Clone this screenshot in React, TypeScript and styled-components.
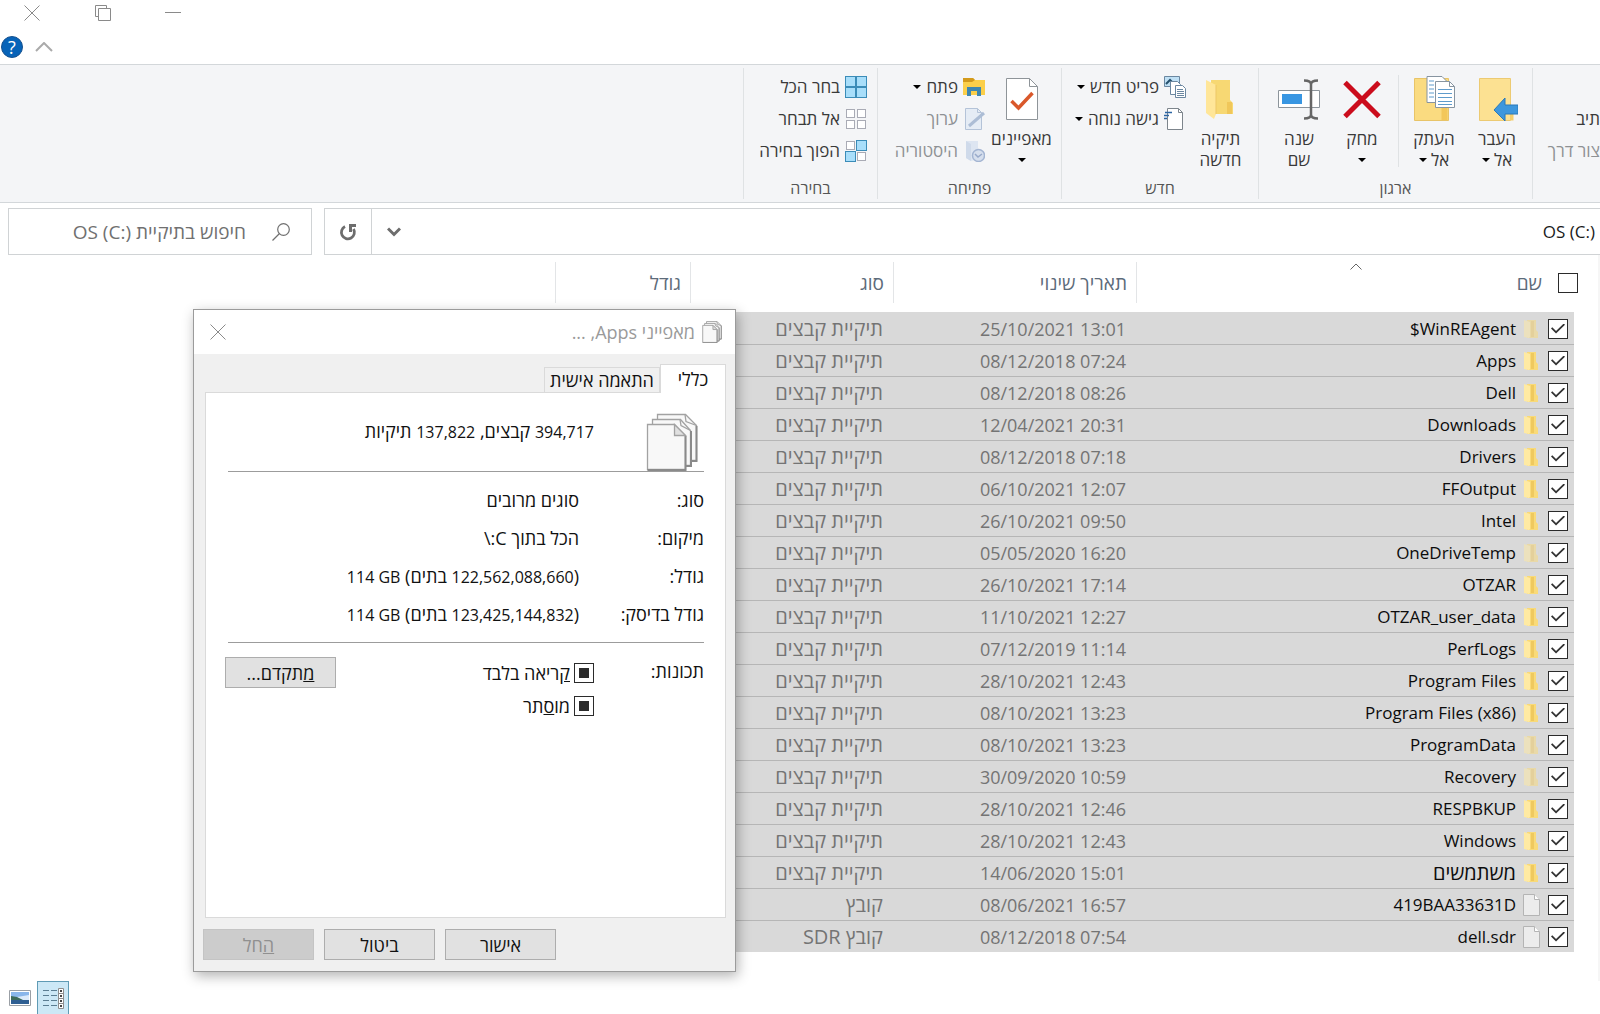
import React from "react";
import styled, { createGlobalStyle, css } from "styled-components";

const uiFont = `"Open Sans", "Noto Sans", sans-serif`;

const GlobalStyle = createGlobalStyle`
  *, *::before, *::after { box-sizing: border-box; }
  body { margin: 0; background: #fff; }
  button, input { font: inherit; color: inherit; margin: 0; }
`;

/* ---------- window frame ---------- */

const Window = styled.div`
  position: relative;
  display: flex;
  flex-direction: column;
  height: 100vh;
  overflow: hidden;
  font-family: ${uiFont};
  font-size: 17px;
  line-height: 20px;
  color: #1a1a1a;
`;

const PlainButton = styled.button`
  display: flex;
  align-items: center;
  justify-content: center;
  padding: 0;
  border: 0;
  background: none;
`;

const TitleBar = styled.header`
  direction: ltr;
  display: flex;
  align-items: center;
  height: 26px;
`;

const CaptionButton = styled(PlainButton)`
  width: 70px;
  height: 26px;
  &:first-child {
    width: 64px;
    margin-right: 4px;
  }
`;

const HelpBar = styled.div`
  direction: ltr;
  display: flex;
  align-items: center;
  gap: 12px;
  height: 38px;
  padding: 4px 0 0 1px;
`;

const HelpButton = styled(PlainButton)`
  width: 22px;
  height: 22px;
  border-radius: 50%;
  background: #0763b8;
  border: 1px solid #15518f;
  color: #fff;
  font-size: 18px;
`;

/* ---------- ribbon ---------- */

const Ribbon = styled.div`
  display: flex;
  height: 139px;
  padding: 3px 0;
  border-top: 1px solid #d3d7da;
  border-bottom: 1px solid #d3d7da;
  background: #f4f5f7;
`;

const Group = styled.section<{ $width: number }>`
  display: flex;
  flex-direction: column;
  flex: none;
  width: ${(p) => p.$width}px;
  border-left: 1px solid #dfe2e4;
`;

const GroupBody = styled.div<{ $pad?: number }>`
  display: flex;
  flex: 1;
  padding-right: ${(p) => p.$pad ?? 0}px;
  padding-top: 3px;
`;

const GroupLabel = styled.h2`
  margin: 0;
  height: 21px;
  padding-left: 0;
  font-size: 16px;
  font-weight: 400;
  line-height: 20px;
  text-align: center;
  color: #555;
`;

const BigButton = styled(PlainButton)<{ $width: number }>`
  flex-direction: column;
  justify-content: flex-start;
  width: ${(p) => p.$width}px;
  padding-top: 5px;
  line-height: 21px;
  color: #3a3a3a;
  white-space: nowrap;
  svg { flex: none; margin-bottom: 6px; }
`;

const LabelLine = styled.span`
  display: flex;
  align-items: center;
  justify-content: center;
  gap: 4px;
  height: 21px;
`;

const Caret = styled.i`
  width: 0;
  height: 0;
  border: 4px solid transparent;
  border-top-color: #000;
  border-bottom-width: 0;
`;

const Divider = styled.span`
  width: 1px;
  height: 92px;
  margin: 4px 4px 0;
  background: #dfe2e4;
`;

const SmallStack = styled.div`
  display: flex;
  flex-direction: column;
`;

const SmallButton = styled(PlainButton)<{ $off?: boolean }>`
  justify-content: flex-start;
  gap: 5px;
  height: 32px;
  color: ${(p) => (p.$off ? "#8e9194" : "#3a3a3a")};
  white-space: nowrap;
  svg { opacity: ${(p) => (p.$off ? 0.6 : 1)}; }
`;

const CutOff = styled.div`
  display: flex;
  flex-direction: column;
  padding-top: 35px;
`;

/* ---------- address row ---------- */

const AddressRow = styled.div`
  display: flex;
  gap: 12px;
  padding: 5px 0 0 8px;
`;

const AddressBox = styled.div`
  display: flex;
  flex: 1;
  height: 47px;
  border: 1px solid #d0d3d5;
  border-right: 0;
`;

const Path = styled.div`
  flex: 1;
  padding-right: 5px;
  line-height: 45px;
`;

const AddressButton = styled(PlainButton)<{ $line?: boolean }>`
  width: ${(p) => (p.$line ? 47 : 44)}px;
  ${(p) => p.$line && css`border-right: 1px solid #d0d3d5;`}
`;

const SearchBox = styled.label`
  display: flex;
  align-items: center;
  gap: 26px;
  width: 304px;
  height: 47px;
  padding-right: 21px;
  border: 1px solid #d0d3d5;
`;

const SearchInput = styled.input`
  flex: 1;
  min-width: 0;
  padding: 0;
  border: 0;
  outline: 0;
  background: none;
  font-size: 19px;
  &::placeholder { color: #707070; opacity: 1; }
`;

/* ---------- file list ---------- */

const Pane = styled.main`
  flex: 1;
  min-height: 0;
  border-right: 2px solid #f6f6f6;
`;

const FileTable = styled.table`
  table-layout: fixed;
  width: 1043px;
  border-collapse: separate;
  border-spacing: 0;
`;

const Th = styled.th`
  padding: 7px 0 9px;
  font-size: 19px;
  font-weight: 400;
  color: #5d6b7a;
`;

const HeadCell = styled.div<{ $pad: number }>`
  position: relative;
  display: flex;
  align-items: center;
  gap: 16px;
  height: 41px;
  padding-right: ${(p) => p.$pad}px;
  border-left: 1px solid #e3e5e7;
`;

const SortMark = styled.svg`
  position: absolute;
  top: 1px;
  left: 0;
  right: 24px;
  margin: 0 auto;
`;

const Row = styled.tr`
  td { border-top: 1px solid #b6b6b6; }
  &:first-child td { border-top-color: #d9d9d9; }
  td:first-child { background: none; border-top-color: transparent; }
`;

const Td = styled.td<{ $size?: number }>`
  height: 32px;
  padding: 0 10px 0 0;
  background: #d9d9d9;
  color: #747474;
  font-size: ${(p) => p.$size ?? 17}px;
  white-space: nowrap;
`;

const Gutter = styled.td`
  height: 32px;
  padding: 0;
`;

const NameCell = styled.label<{ $hebrew: boolean }>`
  display: flex;
  align-items: center;
  height: 31px;
  margin-right: -4px;
  font-size: ${(p) => (p.$hebrew ? 20 : 17)}px;
  color: #0c0c0c;
  svg { margin: 0 8px 0 7px; }
`;

const Tick = styled.input<{ $mixed?: boolean }>`
  appearance: none;
  flex: none;
  display: grid;
  place-items: center;
  width: 20px;
  height: 20px;
  border: 1px solid #2b2b2b;
  background: #fff;
  &:checked::before {
    content: "";
    ${(p) =>
      p.$mixed
        ? css`
            width: 10px;
            height: 10px;
            background: #2b2b2b;
          `
        : css`
            width: 14px;
            height: 10px;
            background: #333;
            clip-path: polygon(0 50%, 9% 38%, 36% 76%, 91% 0, 100% 12%, 36% 100%);
          `}
  }
`;

const StatusBar = styled.footer`
  direction: ltr;
  display: flex;
  gap: 6px;
  height: 33px;
  padding-left: 9px;
`;

const ViewButton = styled(PlainButton)<{ $on?: boolean }>`
  height: 33px;
  ${(p) =>
    p.$on &&
    css`
      width: 32px;
      border: 1px solid #5f9bb5;
      border-bottom: 0;
      background: #cce8f6;
    `}
`;

/* ---------- properties dialog ---------- */

const Dialog = styled.section`
  position: absolute;
  top: 309px;
  left: 193px;
  width: 543px;
  display: flex;
  flex-direction: column;
  border: 1px solid #9b9b9b;
  background: #f0f0f0;
  box-shadow: 2px 4px 12px rgba(0, 0, 0, 0.3);
  font-size: 18px;
  color: #111;
`;

const DialogTitle = styled.header`
  display: flex;
  align-items: center;
  gap: 7px;
  height: 44px;
  padding: 0 13px 0 16px;
  background: #fff;
  color: #9a9a9a;
  button { margin-right: auto; }
`;

const Tabs = styled.div`
  display: flex;
  align-items: flex-end;
  padding: 10px 9px 0;
`;

const Tab = styled.button<{ $on?: boolean }>`
  position: relative;
  height: ${(p) => (p.$on ? 29 : 25)}px;
  width: ${(p) => (p.$on ? 66 : 116)}px;
  padding: 0;
  border: 1px solid #dadada;
  border-bottom: 0;
  margin-bottom: ${(p) => (p.$on ? -1 : 0)}px;
  background: ${(p) => (p.$on ? "#fff" : "#f0f0f0")};
  white-space: nowrap;
`;

const Panel = styled.div`
  height: 526px;
  margin: 0 9px 0 11px;
  padding: 20px 21px 0 19px;
  border: 1px solid #dadada;
  background: #fff;
`;

const Summary = styled.div`
  display: flex;
  gap: 52px;
  height: 58px;
  padding-right: 6px;
  line-height: 36px;
`;

const Figure = styled.bdi`
  font-size: 16px;
`;

const Rule = styled.hr`
  height: 1px;
  margin: 0 0 0 3px;
  border: 0;
  background: #9c9c9c;
`;

const Facts = styled.dl`
  display: grid;
  grid-template-columns: 125px 1fr;
  grid-auto-rows: 38px;
  align-items: center;
  margin: 9px 0;
  dd { margin: 0; }
`;

const Attributes = styled.div`
  display: grid;
  grid-template-columns: 110px 1fr auto;
  align-items: start;
  padding-top: 14px;
`;

const Caption = styled.span`
  line-height: 28px;
`;

const Checks = styled.div`
  display: flex;
  flex-direction: column;
  gap: 13px;
  padding-top: 6px;
`;

const CheckLabel = styled.label`
  display: flex;
  align-items: center;
  gap: 4px;
  height: 20px;
`;

const PushButton = styled.button`
  width: 111px;
  height: 31px;
  padding: 0;
  border: 1px solid #adadad;
  background: #e1e1e1;
  line-height: 20px;
  &:disabled {
    border-color: #c4c4c4;
    background: #cccccc;
    color: #909090;
  }
`;

const DialogFooter = styled.footer`
  display: flex;
  justify-content: flex-end;
  gap: 10px;
  padding: 11px 9px;
`;

/* ---------- drawings ---------- */

const CloseGlyph = () => (
  <svg width="16" height="16" viewBox="0 0 16 16" stroke="#8a8a8a" fill="none">
    <path d="M.5.5l15 15M15.5.5l-15 15" />
  </svg>
);

const SheetsIcon = ({ size }: { size: number }) => (
  <svg width={size} height={Math.round(size * 1.12)} viewBox="0 0 52 58" fill="#f8f8f8" stroke="#a2a2a2" strokeWidth={size > 30 ? 1.3 : 2.4}>
    <path d="M11.500 1.500h28l11 11v35h-39z" />
    <path d="M40 48h10.500V13" fill="none" stroke="#8a8a8a" strokeWidth="2" />
    <path d="M6.500 6.500h28l10 11v35h-38z" />
    <path d="M36 53h9V18" fill="none" stroke="#8a8a8a" strokeWidth="2" />
    <path d="M1.500 11.500h27l11 11v34h-38z" />
    <path d="M1.500 57h38V23" fill="none" stroke="#8a8a8a" strokeWidth="2" />
    <path d="M28.500 11.500v11h11z" fill="#e0e0e0" />
    <path d="M34 6.500l1 6 9.500 5M39 1.500l1 7 10.500 4" fill="none" />
  </svg>
);

const MoveIcon = () => (
  <svg width="42" height="46" viewBox="0 0 42 46">
    <path d="M3.500 2.500h31v42h-31z" fill="#fce192" stroke="#ecca72" />
    <path d="M34.500 36v8.500h3v-8z" fill="#f5cf6c" />
    <path d="M18 34l11-12v7h13v9H29v7z" fill="#3d97dd" stroke="#2a79b8" />
  </svg>
);

const CopyIcon = () => (
  <svg width="42" height="46" viewBox="0 0 42 46">
    <path d="M1.500 2.500h34v42h-34z" fill="#fadb80" stroke="#e8c468" />
    <path d="M28.500 30h6v14h-6z" fill="#f3c75a" />
    <g fill="#fff" stroke="#8794a0">
      <path d="M14 .5h15l5 5v21H14z" />
      <path d="M22.500 5.500h14l5 5v21h-19z" />
      <path d="M36.500 5.500v5h5" fill="none" />
    </g>
    <path d="M16 5h5M16 9h5M16 13h5M16 17h5M16 21h5M25 13.500h14M25 17.500h14M25 21.500h14M25 25.500h14M25 28.500h14" stroke="#5f9bcb" />
  </svg>
);

const DeleteIcon = () => (
  <svg width="42" height="46" viewBox="0 0 42 46" stroke="#cb0c1c" strokeWidth="5">
    <path d="M4 6.500l34 34M38 6.500l-34 34" />
  </svg>
);

const RenameIcon = () => (
  <svg width="42" height="46" viewBox="0 0 42 46" fill="none">
    <path d="M.5 14.500h41v17H.5z" fill="#fff" stroke="#8c949b" />
    <path d="M4 18h20v10H4z" fill="#3896e2" />
    <path d="M26 4.500c5 0 7 1 7 4v30c0 3-2 4-7 4M40 4.500c-5 0-7 1-7 4v30c0 3 2 4 7 4" stroke="#666" strokeWidth="2.500" />
  </svg>
);

const NewFolderIcon = () => (
  <svg width="42" height="46" viewBox="0 0 42 46">
    <path d="M11 4h19v20l3 3v11H11z" fill="#f7d873" />
    <path d="M27 26h5v12h-5z" fill="#f0c75a" />
    <path d="M6 4l10 5v29l-2 5-8-6z" fill="#ffe699" />
    <path d="M16 9v29" stroke="#edc766" />
  </svg>
);

const PropertiesIcon = () => (
  <svg width="42" height="46" viewBox="0 0 42 46" fill="none">
    <path d="M5.500 2.500h23l8 8v33h-31z" fill="#fff" stroke="#8e9499" />
    <path d="M28.500 2.500v8h8" stroke="#8e9499" />
    <path d="M10.500 25l7 7 14-15" stroke="#d9582b" strokeWidth="3.500" />
  </svg>
);

const NewItemIcon = () => (
  <svg width="22" height="22" viewBox="0 0 22 22" stroke="#6b87a0">
    <path d="M.5.5h15v10H.5z" fill="#bfe0f5" />
    <path d="M2 8l4-4 4 4" fill="none" stroke="#26516d" strokeWidth="2" />
    <path d="M6.500 5.500h7l3 3v10h-10z" fill="#fff" />
    <path d="M11.500 9.500h7l3 3v9h-10z" fill="#fff" />
    <path d="M13 13.500h6M13 15.500h7M13 17.500h7M13 19.500h7" />
  </svg>
);

const EasyAccessIcon = () => (
  <svg width="22" height="22" viewBox="0 0 22 22" fill="none">
    <path d="M3.500.5h11l4 4v17h-15z" fill="#fff" stroke="#7d858c" />
    <path d="M14.500.5v4h4" stroke="#7d858c" />
    <path d="M1 4.500h7M0 7.500h5M0 10.500h3" stroke="#2c66a3" strokeWidth="1.500" />
  </svg>
);

const OpenIcon = () => (
  <svg width="22" height="22" viewBox="0 0 22 22">
    <path d="M0 2h10l2 2h10v15H0z" fill="#fbcf4a" />
    <path d="M0 2h10l2 2-3 2H0z" fill="#d39a1c" />
    <path d="M4 20v-9h14v9h-4v-5H8v5z" fill="#3f87b0" />
  </svg>
);

const EditIcon = () => (
  <svg width="22" height="22" viewBox="0 0 22 22" fill="none">
    <path d="M2.500.5h12l4 4v17h-16z" fill="#dce7f5" stroke="#8aa3c4" />
    <path d="M14.500.5v4h4" stroke="#8aa3c4" />
    <path d="M6 18L21 5" stroke="#7d98bf" strokeWidth="3" />
  </svg>
);

const HistoryIcon = () => (
  <svg width="22" height="22" viewBox="0 0 22 22" fill="none">
    <path d="M3 1h12v18l-7 2-5-3z" fill="#cfdcee" />
    <path d="M3 1l5 3v17l-5-3z" fill="#b7c9e3" />
    <circle cx="15.500" cy="15.500" r="6" fill="#c3d1e8" stroke="#6f8bbb" strokeWidth="1.500" />
    <path d="M12 14l3 3 4-3" stroke="#5c79ad" strokeWidth="1.500" />
  </svg>
);

const TilesIcon = ({ on }: { on: number[] }) => (
  <svg width="22" height="22" viewBox="0 0 22 22">
    {[0, 1, 2, 3].map((i) => (
      <rect
        key={i}
        x={(i % 2) * 11 + 0.5 + (on.includes(i) ? 0 : 1)}
        y={Math.floor(i / 2) * 11 + 0.5 + (on.includes(i) ? 0 : 1)}
        width={on.includes(i) ? 10 : 8}
        height={on.includes(i) ? 10 : 8}
        fill={on.includes(i) ? "#a8defa" : "#fff"}
        stroke={on.includes(i) ? "#3b8cb8" : "#a9abb5"}
      />
    ))}
  </svg>
);

const FolderIcon = ({ dim }: { dim?: boolean }) => (
  <svg width="17" height="20" viewBox="0 0 17 20" opacity={dim ? 0.5 : 1}>
    <path d="M4 1h9v10l2 2v6H4z" fill="#f9da78" />
    <path d="M8 2h3v16H8z" fill="#efc95f" />
    <path d="M1 1l6 2v15l-1 1-5-1z" fill="#ffeaa3" />
  </svg>
);

const FileIcon = () => (
  <svg width="17" height="22" viewBox="0 0 17 22" fill="#ececec" stroke="#b4b4b4">
    <path d="M.5.5h11l5 5v16H.5z" />
    <path d="M11.500.5v5h5" fill="#fff" />
  </svg>
);

/* ---------- data ---------- */

const FOLDER = "תיקיית קבצים";

type Entry = { name: string; date: string; type?: string; dim?: boolean; hebrew?: boolean };

const entries: Entry[] = [
  { name: "$WinREAgent", date: "25/10/2021 13:01", dim: true },
  { name: "Apps", date: "08/12/2018 07:24" },
  { name: "Dell", date: "08/12/2018 08:26" },
  { name: "Downloads", date: "12/04/2021 20:31" },
  { name: "Drivers", date: "08/12/2018 07:18" },
  { name: "FFOutput", date: "06/10/2021 12:07" },
  { name: "Intel", date: "26/10/2021 09:50" },
  { name: "OneDriveTemp", date: "05/05/2020 16:20", dim: true },
  { name: "OTZAR", date: "26/10/2021 17:14" },
  { name: "OTZAR_user_data", date: "11/10/2021 12:27" },
  { name: "PerfLogs", date: "07/12/2019 11:14" },
  { name: "Program Files", date: "28/10/2021 12:43" },
  { name: "Program Files (x86)", date: "08/10/2021 13:23" },
  { name: "ProgramData", date: "08/10/2021 13:23", dim: true },
  { name: "Recovery", date: "30/09/2020 10:59", dim: true },
  { name: "RESPBKUP", date: "28/10/2021 12:46" },
  { name: "Windows", date: "28/10/2021 12:43" },
  { name: "משתמשים", date: "14/06/2020 15:01", hebrew: true },
  { name: "419BAA33631D", date: "08/06/2021 16:57", type: "קובץ" },
  { name: "dell.sdr", date: "08/12/2018 07:54", type: "קובץ SDR" },
];

/* ---------- sections ---------- */

const RibbonBar = () => (
  <Ribbon>
    <Group $width={68}>
      <CutOff>
        <SmallButton>תיב</SmallButton>
        <SmallButton $off>צור דרך</SmallButton>
      </CutOff>
    </Group>
    <Group $width={274}>
      <GroupBody $pad={3}>
        <BigButton $width={64}>
          <MoveIcon />
          <LabelLine>העבר</LabelLine>
          <LabelLine>אל<Caret /></LabelLine>
        </BigButton>
        <BigButton $width={62}>
          <CopyIcon />
          <LabelLine>העתק</LabelLine>
          <LabelLine>אל<Caret /></LabelLine>
        </BigButton>
        <Divider />
        <BigButton $width={64}>
          <DeleteIcon />
          <LabelLine>מחק</LabelLine>
          <LabelLine><Caret /></LabelLine>
        </BigButton>
        <BigButton $width={62}>
          <RenameIcon />
          <LabelLine>שנה</LabelLine>
          <LabelLine>שם</LabelLine>
        </BigButton>
      </GroupBody>
      <GroupLabel>ארגון</GroupLabel>
    </Group>
    <Group $width={197}>
      <GroupBody $pad={3}>
        <BigButton $width={69}>
          <NewFolderIcon />
          <LabelLine>תיקיה</LabelLine>
          <LabelLine>חדשה</LabelLine>
        </BigButton>
        <SmallStack>
          <SmallButton><NewItemIcon />פריט חדש<Caret /></SmallButton>
          <SmallButton><EasyAccessIcon />גישה נוחה<Caret /></SmallButton>
        </SmallStack>
      </GroupBody>
      <GroupLabel>חדש</GroupLabel>
    </Group>
    <Group $width={184}>
      <GroupBody $pad={3}>
        <BigButton $width={73}>
          <PropertiesIcon />
          <LabelLine>מאפיינים</LabelLine>
          <LabelLine><Caret /></LabelLine>
        </BigButton>
        <SmallStack>
          <SmallButton><OpenIcon />פתח<Caret /></SmallButton>
          <SmallButton $off disabled><EditIcon />ערוך</SmallButton>
          <SmallButton $off disabled><HistoryIcon />היסטוריה</SmallButton>
        </SmallStack>
      </GroupBody>
      <GroupLabel>פתיחה</GroupLabel>
    </Group>
    <Group $width={134}>
      <GroupBody $pad={10}>
        <SmallStack>
          <SmallButton><TilesIcon on={[0, 1, 2, 3]} />בחר הכל</SmallButton>
          <SmallButton><TilesIcon on={[]} />אל תבחר</SmallButton>
          <SmallButton><TilesIcon on={[1, 2]} />הפוך בחירה</SmallButton>
        </SmallStack>
      </GroupBody>
      <GroupLabel>בחירה</GroupLabel>
    </Group>
  </Ribbon>
);

const FileList = () => (
  <FileTable>
    <colgroup>
      <col style={{ width: 24 }} />
      <col style={{ width: 438 }} />
      <col style={{ width: 243 }} />
      <col style={{ width: 203 }} />
      <col />
    </colgroup>
    <thead>
      <tr>
        <Th colSpan={2}>
          <HeadCell $pad={20}>
            <Tick type="checkbox" aria-label="בחר הכל" />
            שם
            <SortMark width="12" height="7" viewBox="0 0 12 7" fill="none" stroke="#666">
              <path d="M.5 6.500L6 1l5.500 5.500" />
            </SortMark>
          </HeadCell>
        </Th>
        <Th><HeadCell $pad={9}>תאריך שינוי</HeadCell></Th>
        <Th><HeadCell $pad={9}>סוג</HeadCell></Th>
        <Th><HeadCell $pad={9}>גודל</HeadCell></Th>
      </tr>
    </thead>
    <tbody>
      {entries.map((e) => (
        <Row key={e.name}>
          <Gutter />
          <Td>
            <NameCell $hebrew={!!e.hebrew}>
              <Tick type="checkbox" defaultChecked />
              {e.type ? <FileIcon /> : <FolderIcon dim={e.dim} />}
              <bdi>{e.name}</bdi>
            </NameCell>
          </Td>
          <Td $size={18}><bdi dir="ltr">{e.date}</bdi></Td>
          <Td $size={20}>{e.type ?? FOLDER}</Td>
          <Td />
        </Row>
      ))}
    </tbody>
  </FileTable>
);

const PropertiesDialog = () => (
  <Dialog role="dialog" aria-label="מאפיינים">
    <DialogTitle>
      <SheetsIcon size={20} />
      <span>מאפייני Apps, ...</span>
      <PlainButton aria-label="סגור"><CloseGlyph /></PlainButton>
    </DialogTitle>
    <Tabs role="tablist">
      <Tab role="tab" $on>כללי</Tab>
      <Tab role="tab">התאמה אישית</Tab>
    </Tabs>
    <Panel>
      <Summary>
        <SheetsIcon size={52} />
        <span><Figure>394,717</Figure> קבצים, <Figure>137,822</Figure> תיקיות</span>
      </Summary>
      <Rule />
      <Facts>
        <dt>סוג:</dt>
        <dd>סוגים מרובים</dd>
        <dt>מיקום:</dt>
        <dd>הכל בתוך C:\</dd>
        <dt>גודל:</dt>
        <dd>(<Figure>122,562,088,660</Figure> בתים) <Figure dir="ltr">114 GB</Figure></dd>
        <dt>גודל בדיסק:</dt>
        <dd>(<Figure>123,425,144,832</Figure> בתים) <Figure dir="ltr">114 GB</Figure></dd>
      </Facts>
      <Rule />
      <Attributes>
        <Caption>תכונות:</Caption>
        <Checks>
          <CheckLabel><Tick type="checkbox" $mixed defaultChecked /><span><u>ק</u>ריאה בלבד</span></CheckLabel>
          <CheckLabel><Tick type="checkbox" $mixed defaultChecked /><span>מו<u>ס</u>תר</span></CheckLabel>
        </Checks>
        <PushButton><u>מ</u>תקדם...</PushButton>
      </Attributes>
    </Panel>
    <DialogFooter>
      <PushButton>אישור</PushButton>
      <PushButton>ביטול</PushButton>
      <PushButton disabled><u>ה</u>חל</PushButton>
    </DialogFooter>
  </Dialog>
);

export default function App() {
  return (
    <Window dir="rtl">
      <GlobalStyle />
      <TitleBar>
        <CaptionButton aria-label="סגור"><CloseGlyph /></CaptionButton>
        <CaptionButton aria-label="שחזר">
          <svg width="16" height="16" viewBox="0 0 16 16" fill="none" stroke="#8a8a8a">
            <path d="M3.500 11.500h-3V.5h11v3M3.500 3.500h12v12h-12z" />
          </svg>
        </CaptionButton>
        <CaptionButton aria-label="מזער">
          <svg width="16" height="16" viewBox="0 0 16 16" stroke="#8a8a8a">
            <path d="M0 7.500h16" />
          </svg>
        </CaptionButton>
      </TitleBar>
      <HelpBar>
        <HelpButton aria-label="עזרה">?</HelpButton>
        <PlainButton aria-label="מזער רצועה">
          <svg width="18" height="10" viewBox="0 0 18 10" fill="none" stroke="#aaa" strokeWidth="2">
            <path d="M1 9l8-8 8 8" />
          </svg>
        </PlainButton>
      </HelpBar>
      <RibbonBar />
      <AddressRow>
        <AddressBox>
          <Path><bdi>OS (C:)</bdi></Path>
          <AddressButton aria-label="מיקומים קודמים">
            <svg width="14" height="10" viewBox="0 0 14 10" fill="none" stroke="#6d6d6d" strokeWidth="3">
              <path d="M1 1.500l6 6 6-6" />
            </svg>
          </AddressButton>
          <AddressButton $line aria-label="רענן">
            <svg width="18" height="18" viewBox="0 0 18 18" fill="none" stroke="#6d6d6d" strokeWidth="2.800">
              <path d="M6 3.500A6.500 6.500 0 1 0 14.500 6" />
              <path d="M10 1h7v3h-4v5h-3z" fill="#6d6d6d" stroke="none" />
            </svg>
          </AddressButton>
        </AddressBox>
        <SearchBox>
          <svg width="18" height="18" viewBox="0 0 18 18" fill="none" stroke="#707070" strokeWidth="1.200">
            <circle cx="11.500" cy="6.500" r="5.800" />
            <path d="M7.500 10.500L.5 17.500" />
          </svg>
          <SearchInput aria-label="חיפוש" placeholder="חיפוש בתיקיית OS (C:)" />
        </SearchBox>
      </AddressRow>
      <Pane><FileList /></Pane>
      <StatusBar>
        <ViewButton aria-label="תמונות ממוזערות">
          <svg width="22" height="16" viewBox="0 0 22 16">
            <path d="M.5.5h21v15H.5z" fill="#fff" stroke="#9a9fa5" />
            <path d="M2 2h18v12H2z" fill="#8ab6ea" />
            <path d="M8 7l12-2v5H8z" fill="#dceafa" />
            <path d="M2 6l6 1 6 3H2z" fill="#3d6a5a" />
            <path d="M2 10h18v4H2z" fill="#2f5f92" />
          </svg>
        </ViewButton>
        <ViewButton $on aria-label="פרטים">
          <svg width="22" height="22" viewBox="0 0 22 22" fill="none">
            <path d="M1 3.500h6M9 3.500h6M1 8.500h6M9 8.500h6M1 13.500h6M9 13.500h6M1 18.500h6M9 18.500h6" stroke="#5a7d92" />
            <path d="M16.500 1.500h5v20h-5zM16.500 6.500h5M16.500 11.500h5M16.500 16.500h5" fill="#fff" stroke="#8d8d8d" />
            <path d="M18 4h2M18 9h2M18 14h2M18 19h2" stroke="#444" strokeWidth="2" />
          </svg>
        </ViewButton>
      </StatusBar>
      <PropertiesDialog />
    </Window>
  );
}
